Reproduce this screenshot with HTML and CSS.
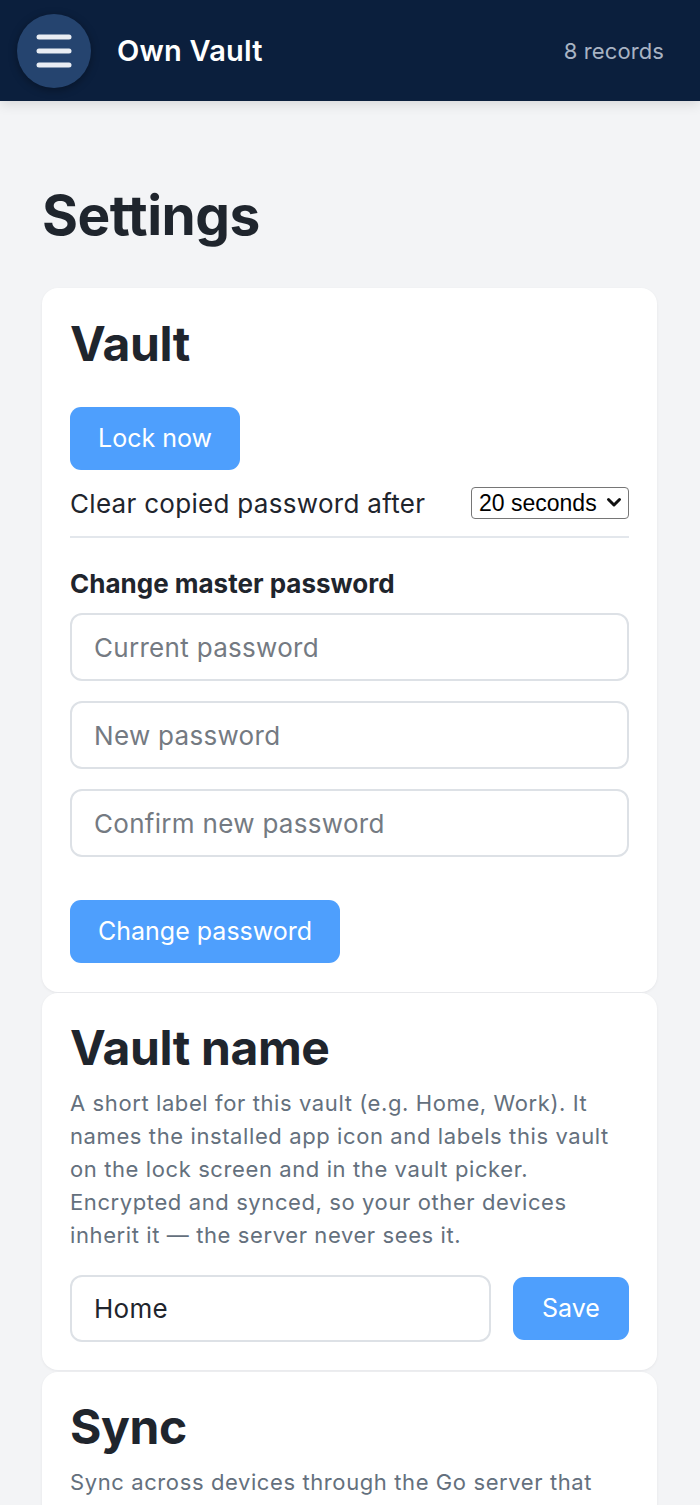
FILE: index.html
```html
<!DOCTYPE html>
<html lang="en">
<head>
<meta charset="utf-8">
<title>Own Vault – Settings</title>
<link rel="stylesheet" href="styles.css">
</head>
<body>
<header class="topbar">
  <button class="menu-btn" aria-label="Menu">
    <svg width="36" height="36" viewBox="0 0 36 36" aria-hidden="true">
      <g stroke="#e9edf3" stroke-width="5" stroke-linecap="round">
        <line x1="3" y1="4" x2="33" y2="4"/>
        <line x1="3" y1="18" x2="33" y2="18"/>
        <line x1="3" y1="32" x2="33" y2="32"/>
      </g>
    </svg>
  </button>
  <span class="brand">Own Vault</span>
  <span class="count">8 records</span>
</header>

<main class="page">
  <h1 class="page-title">Settings</h1>

  <section class="card">
    <h2 class="card-title">Vault</h2>
    <button class="btn btn-lock">Lock now</button>
    <div class="setting-row">
      <span class="setting-label">Clear copied password after</span>
      <span class="select-wrap">
        <select class="select">
          <option>20 seconds</option>
        </select>
        <svg class="select-chevron" width="16" height="11" viewBox="0 0 16 11" aria-hidden="true">
          <path d="M2.5 2.5 L8 8 L13.5 2.5" fill="none" stroke="#111" stroke-width="3" stroke-linecap="round" stroke-linejoin="round"/>
        </svg>
      </span>
    </div>
    <h3 class="sub-title">Change master password</h3>
    <div class="field-stack">
      <input class="field" type="password" placeholder="Current password">
      <input class="field" type="password" placeholder="New password">
      <input class="field" type="password" placeholder="Confirm new password">
    </div>
    <button class="btn btn-change">Change password</button>
  </section>

  <section class="card card-name">
    <h2 class="card-title">Vault name</h2>
    <p class="desc">A short label for this vault (e.g. Home, Work). It names the installed app icon and labels this vault on the lock screen and in the vault picker. Encrypted and synced, so your other devices inherit it — the server never sees it.</p>
    <div class="inline-row">
      <input class="field field-grow" type="text" value="Home">
      <button class="btn btn-save">Save</button>
    </div>
  </section>

  <section class="card card-sync">
    <h2 class="card-title">Sync</h2>
    <p class="desc">Sync across devices through the Go server that you run yourself. Only encrypted data ever leaves this device.</p>
  </section>
</main>
</body>
</html>
```

FILE: styles.css
```css
* {
  box-sizing: border-box;
}

html, body {
  margin: 0;
  padding: 0;
}

body {
  background: #f3f4f6;
  font-family: Inter, "Liberation Sans", Arial, sans-serif;
  color: #1f252d;
}

.topbar {
  height: 101px;
  background: #0b1f3d;
  display: flex;
  align-items: center;
  padding: 0 36px 0 17px;
  box-shadow: 0 3px 12px rgba(0, 0, 0, 0.12);
  position: relative;
  z-index: 1;
}

.menu-btn {
  width: 74px;
  height: 74px;
  border-radius: 50%;
  border: none;
  background: #25446f;
  display: flex;
  align-items: center;
  justify-content: center;
  padding: 0;
  box-shadow: 0 2px 8px rgba(0, 0, 0, 0.35);
}

.brand {
  margin-left: 26px;
  color: #ffffff;
  font-size: 29px;
  font-weight: 600;
  letter-spacing: 0.2px;
}

.count {
  margin-left: auto;
  color: #a8b3c3;
  font-size: 22px;
  letter-spacing: 0.1px;
}

.page {
  padding: 0 43px 0 42px;
}

.page-title {
  margin: 0;
  padding-top: 81px;
  padding-bottom: 40px;
  font-size: 55px;
  line-height: 66px;
  font-weight: 700;
  color: #1f252d;
  letter-spacing: -0.5px;
}

.card {
  background: #ffffff;
  border-radius: 16px;
  padding: 27px 28px 29px;
  margin-bottom: 1px;
  box-shadow: 0 1px 3px rgba(15, 23, 42, 0.06);
  display: flex;
  flex-direction: column;
  align-items: flex-start;
}

.card-name {
  padding-top: 26px;
  padding-bottom: 28px;
  margin-bottom: 2px;
}

.card-sync {
  padding-top: 26px;
}

.card-title {
  margin: 0;
  font-size: 48px;
  line-height: 58px;
  font-weight: 700;
  color: #1f252d;
  letter-spacing: -0.4px;
}

.btn {
  border: none;
  background: #4e9ffd;
  color: #ffffff;
  font-family: inherit;
  font-size: 25px;
  line-height: 31px;
  height: 63px;
  padding: 0 28px;
  border-radius: 11px;
}

.btn-lock {
  margin-top: 34px;
}

.setting-row {
  align-self: stretch;
  display: flex;
  align-items: center;
  justify-content: space-between;
  min-height: 68px;
  padding: 14px 0;
  border-bottom: 2px solid #e3e7ec;
}

.setting-label {
  font-size: 26px;
  letter-spacing: 0.3px;
  color: #1f252d;
}

.select-wrap {
  position: relative;
  display: inline-flex;
}

.select {
  appearance: none;
  -webkit-appearance: none;
  width: 158px;
  height: 32px;
  border: 1px solid #767676;
  border-radius: 4px;
  background: #ffffff;
  font-family: "Liberation Sans", Arial, sans-serif;
  font-size: 23px;
  color: #000000;
  padding: 0 24px 0 7px;
}

.select-chevron {
  position: absolute;
  right: 7px;
  top: 10px;
  pointer-events: none;
}

.sub-title {
  margin: 30px 0 0;
  font-size: 26px;
  line-height: 31px;
  font-weight: 700;
  color: #1f252d;
}

.field-stack {
  align-self: stretch;
  display: flex;
  flex-direction: column;
  gap: 20px;
  margin-top: 14px;
}

.field {
  width: 100%;
  min-width: 0;
  height: 68px;
  border: 2px solid #dde1e6;
  border-radius: 12px;
  padding: 0 22px;
  font-family: inherit;
  font-size: 26px;
  letter-spacing: 0.3px;
  color: #1f252d;
  background: #ffffff;
  outline: none;
}

.field::placeholder {
  color: #747a82;
}

.btn-change {
  margin-top: 43px;
}

.desc {
  margin: 10px 0 0;
  font-size: 22px;
  line-height: 33px;
  letter-spacing: 0.6px;
  color: #64707d;
}

.inline-row {
  align-self: stretch;
  display: flex;
  align-items: center;
  gap: 22px;
  margin-top: 23px;
}

.field-grow {
  flex: 1 1 0;
  width: auto;
  height: 67px;
}

.btn-save {
  flex: none;
  width: 116px;
  padding: 0;
}
```
